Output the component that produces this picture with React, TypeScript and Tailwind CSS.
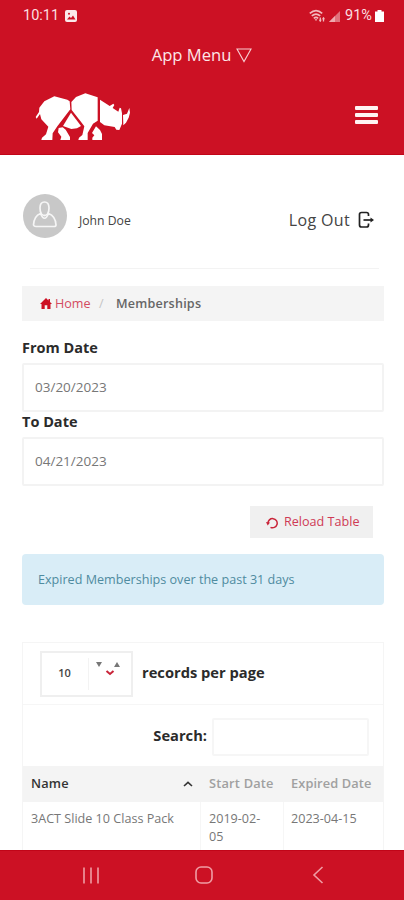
import React from "react";

function RhinoLogo() {
  return (
    <svg viewBox="105 277 288 144" className="h-12 w-24" fill="#fff">
      <path d="M163 287 L202 297 L209 302 L211 326 L172 377 L158 398 L157 418 L124 418 L126 411 L138 401 L145 378 L124 356 L120 340 L110 354 L107 349 L117 334 L118 321 L133 302 Z" />
      <path d="M214 304 L228 289 L256 278 L293 290 L293 360 L279 369 L263 397 L263 418 L235 418 L237 411 L247 403 L253 377 L241 361 L215 328 Z" />
      <path d="M213 336 L243 376 L231 383 L214 385 L189 376 Z" />
      <path d="M176 382 L188 380 L197 387 L210 409 L210 418 L181 418 L184 408 L174 395 Z" />
      <path d="M288 377 L300 388 L306 400 L306 418 L277 418 L277 411 L283 404 L276 397 Z" />
      <path d="M300 297 L321 311 L329 316 L340 309 L343 313 L338 322 L355 333 L359 321 L363 323 L366 338 L366 369 L358 388 L349 387 L344 379 L313 374 L300 364 Z" />
      <path d="M369 343 L381 339 L388 322 L390 336 L386 351 L378 366 L370 374 Z" />
    </svg>
  );
}

function StatusBar() {
  return (
    <div className="flex h-8 items-center justify-between pr-5 pl-[23px] font-['Roboto',sans-serif] text-[14.5px] text-[#fbdfe1]">
      <div className="flex items-center gap-[7px]">
        <span className="w-[35px]">10:11</span>
        <svg viewBox="0 0 12 12" className="h-3 w-3">
          <rect width="12" height="12" rx="2" fill="#fbe9ea" />
          <path d="M2 9.5 L4.5 6.5 L6 8 L8 5.5 L10.5 9.5 Z" fill="#cc1124" />
          <circle cx="4" cy="3.7" r="1" fill="#cc1124" />
        </svg>
      </div>
      <div className="flex items-center">
        <svg viewBox="0 0 17 14" className="h-3.5 w-[17px]" fill="none" stroke="#f3b9be" strokeWidth="1.7">
          <path d="M0.8 4.3 Q7 -1.2 13.2 4.3" />
          <path d="M2.8 6.8 Q7 3.3 11.2 6.8" />
          <path d="M4.8 9.3 Q7 7.6 9.2 9.3" />
          <path d="M5.6 10.2 L8.4 10.2 L7 12 Z" fill="#f3b9be" stroke="none" />
          <path d="M11.3 12.5 V8.5 M14.5 8.5 V12.5" strokeWidth="1.3" />
          <path d="M9.8 10.8 L11.3 13 L12.8 10.8 Z M13 10.2 L14.5 8 L16 10.2 Z" fill="#f3b9be" stroke="none" />
        </svg>
        <svg viewBox="0 0 11 11" className="ml-[3px] h-[11px] w-[11px]">
          <path d="M0 11 L11 0 V11 Z" fill="#e0727c" />
          <path d="M0 11 L6 5 V11 Z" fill="#efa9ae" />
        </svg>
        <span className="ml-[5px] w-[29px]">91%</span>
        <svg viewBox="0 0 9 12" className="ml-px h-3 w-[9px]" fill="#fff">
          <path d="M2.5 0 H6.5 V1.5 H9 V12 H0 V1.5 H2.5 Z" />
        </svg>
      </div>
    </div>
  );
}

function Header() {
  return (
    <header className="h-[155px] shrink-0 border-b border-[#c10518] bg-[#cc1124]">
      <StatusBar />
      <div className="flex h-[46px] items-center justify-center gap-[5px] text-[16.6px] text-[#fde7e8]">
        <span>App Menu</span>
        <svg viewBox="0 0 16 15" className="h-[15px] w-4" fill="none" stroke="#f8cdd0" strokeWidth="1.1">
          <path d="M1 1 H15 L8 13.5 Z" />
        </svg>
      </div>
      <div className="flex items-center justify-between pt-[15px] pr-[26px] pl-[35px]">
        <RhinoLogo />
        <div className="flex w-[23px] flex-col gap-[3px] pb-1">
          <div className="h-1 rounded-[1px] bg-[#fff3f3]" />
          <div className="h-1 rounded-[1px] bg-[#fff3f3]" />
          <div className="h-1 rounded-[1px] bg-[#fff3f3]" />
        </div>
      </div>
    </header>
  );
}

function UserRow() {
  return (
    <div className="ml-2 mr-[5px] flex h-[114px] items-start justify-between border-b border-[#f3f3f3] pt-[39px]">
      <div className="-ml-[7px] flex">
        <svg viewBox="0 0 44 44" className="h-11 w-11" fill="none" stroke="#f6f6f6" strokeWidth="1.7">
          <circle cx="22" cy="22" r="22" fill="#c8c8c8" stroke="none" />
          <path d="M17 14 Q17 8 21.5 8 Q26 8 26 14 Q26 18 24.5 20 Q21.5 23 18.5 20 Q17 18 17 14 Z" />
          <path d="M17.5 19.5 Q11 22 10.5 31 Q11 32.5 13 32.5 H31 Q33 32.5 33 31 Q32.5 22 25.5 19.5 Q21.5 29 17.5 19.5 Z" />
        </svg>
        <span className="mt-[18px] ml-3 text-[12.2px] leading-[18px] text-[#444]">John Doe</span>
      </div>
      <div className="mt-[14px] mr-1 flex items-center gap-2">
        <span className="text-[16px] leading-6 tracking-[0.35px] text-[#444]">Log Out</span>
        <svg viewBox="0 0 17 18" className="h-[18px] w-[17px]" fill="none" stroke="#222" strokeWidth="1.7">
          <path d="M10.5 5 V3.5 Q10.5 1.5 8.5 1.5 H3.5 Q1.5 1.5 1.5 3.5 V14 Q1.5 16 3.5 16 H8.5 Q10.5 16 10.5 14 V12.5" />
          <path d="M5.5 9 H14" />
          <path d="M12.5 6.5 L16 9 L12.5 11.5 Z" fill="#222" stroke="none" />
        </svg>
      </div>
    </div>
  );
}

function Breadcrumb() {
  return (
    <nav className="mt-[17px] flex h-[35px] items-center bg-[#f4f4f4] pt-px pl-[18px] text-[12.6px]">
      <svg viewBox="0 0 12 11" className="mb-px h-[11px] w-3" fill="#cc1124">
        <path d="M6 0 L8.5 2.5 V1 H10 V4 L12 6 H10.5 V11 H7.3 V7.3 H4.7 V11 H1.5 V6 H0 Z" />
      </svg>
      <span className="ml-[3px] w-9 text-[#d34a60]">Home</span>
      <span className="ml-2 w-[17px] text-[#c4c4c4]">/</span>
      <span className="font-semibold tracking-[0.2px] text-[#666]">Memberships</span>
    </nav>
  );
}

function DateField({ label, value }: { label: string; value: string }) {
  return (
    <div>
      <div className="h-[25px] text-[14.5px] leading-[20px] font-bold text-[#2b2b2b]">{label}</div>
      <div className="flex h-[49px] items-center rounded-[2px] border-2 border-[#f3f3f3] pl-[11px] text-[13.5px] text-[#777]">
        {value}
      </div>
    </div>
  );
}

function RecordsSelect() {
  return (
    <div className="flex h-[46px] w-[93px] items-center border-2 border-[#efefef]">
      <span className="w-[45px] text-center text-[11px] font-semibold text-[#444]">10</span>
      <svg viewBox="0 0 42 32" className="h-8 w-[42px]">
        <path d="M1.5 0 V32" stroke="#f3f3f3" />
        <path d="M9 4 H15 L12 9 Z" fill="#777" />
        <path d="M27 9 H33 L30 4 Z" fill="#777" />
        <path d="M19.5 13 L23 16 L26.5 13" fill="none" stroke="#c92439" strokeWidth="2" />
      </svg>
    </div>
  );
}

function MembershipTable() {
  return (
    <div className="mt-[37px] border-x border-t border-[#f5f5f5]">
      <div className="flex h-[62px] items-center border-b border-[#f6f6f6] pl-[17px]">
        <RecordsSelect />
        <span className="mb-[3px] ml-[9px] text-[14.7px] font-bold text-[#2b2b2b]">records per page</span>
      </div>
      <div className="flex h-[61px] items-center justify-end pr-[14px]">
        <span className="text-[14.7px] font-bold text-[#2b2b2b]">Search:</span>
        <div className="mt-[3px] ml-[5px] h-[38px] w-[157px] rounded-[2px] border-2 border-[#f6f6f6]" />
      </div>
      <div className="grid h-9 grid-cols-[177px_83px_1fr] items-center bg-[#f4f4f4] pb-px text-[12.8px] font-semibold">
        <div className="flex items-center justify-between pr-[7px] pl-2 text-[#333]">
          <span className="tracking-[0.2px]">Name</span>
          <svg viewBox="0 0 10 6" className="h-1.5 w-2.5" fill="none" stroke="#333" strokeWidth="1.6">
            <path d="M1 5 L5 1.3 L9 5" />
          </svg>
        </div>
        <span className="pl-[9px] tracking-[0.2px] whitespace-nowrap text-[#a0a0a0]">Start Date</span>
        <span className="pl-2 tracking-[0.1px] whitespace-nowrap text-[#a0a0a0]">Expired Date</span>
      </div>
      <div className="grid h-[60px] grid-cols-[177px_83px_1fr] text-[12.6px] leading-[18px] text-[#777]">
        <div className="pt-2 pl-2 whitespace-nowrap">3ACT Slide 10 Class Pack</div>
        <div className="border-l border-[#f6f6f6] pt-2 pl-2">
          2019-02-
          <br />
          05
        </div>
        <div className="border-l border-[#f6f6f6] pt-2 pl-[7px]">2023-04-15</div>
      </div>
    </div>
  );
}

function NavBar() {
  return (
    <footer className="flex h-[50px] shrink-0 items-center border-t border-[#c10518] bg-[#cc1124] pb-px pl-[82px]">
      <svg viewBox="0 0 18 17" className="h-[17px] w-[18px]" stroke="#ef9da4" strokeWidth="1.6">
        <path d="M2 0.5 V16.5 M9 0.5 V16.5 M16 0.5 V16.5" />
      </svg>
      <svg viewBox="0 0 18 18" className="ml-[95px] h-[18px] w-[18px]" fill="none" stroke="#ef9da4" strokeWidth="1.6">
        <rect x="1" y="1" width="16" height="16" rx="5" />
      </svg>
      <svg viewBox="0 0 12 18" className="ml-[99px] h-[18px] w-3" fill="none" stroke="#ef9da4" strokeWidth="1.6">
        <path d="M10.5 1 L2 9 L10.5 17" />
      </svg>
    </footer>
  );
}

export default function App() {
  return (
    <div className="flex h-[900px] w-[404px] flex-col overflow-hidden bg-white font-['Open_Sans',sans-serif]">
      <Header />
      <main className="min-h-0 flex-1 overflow-hidden pr-5 pl-[22px]">
        <UserRow />
        <Breadcrumb />
        <div className="mt-[17px]">
          <DateField label="From Date" value="03/20/2023" />
          <DateField label="To Date" value="04/21/2023" />
        </div>
        <div className="mt-5 flex justify-end pr-[11px]">
          <button className="flex h-8 w-[123px] items-center bg-[#f0f0f0] pt-px pl-4 text-[12.6px] whitespace-nowrap text-[#cf3a55]">
            <svg viewBox="0 0 12 12" className="mr-[6px] h-3 w-3" fill="none" stroke="#c92439" strokeWidth="1.5">
              <path d="M2 6.5 A4.6 4.6 0 1 1 4.5 10.3" />
              <path d="M0 5 L4 5.4 L1.7 8.4 Z" fill="#c92439" stroke="none" />
            </svg>
            Reload Table
          </button>
        </div>
        <div className="mt-4 flex h-[51px] items-center rounded-[4px] bg-[#d9edf7] pt-px pl-4 text-[12.6px] text-[#4f8ba0]">
          Expired Memberships over the past 31 days
        </div>
        <MembershipTable />
      </main>
      <NavBar />
    </div>
  );
}
